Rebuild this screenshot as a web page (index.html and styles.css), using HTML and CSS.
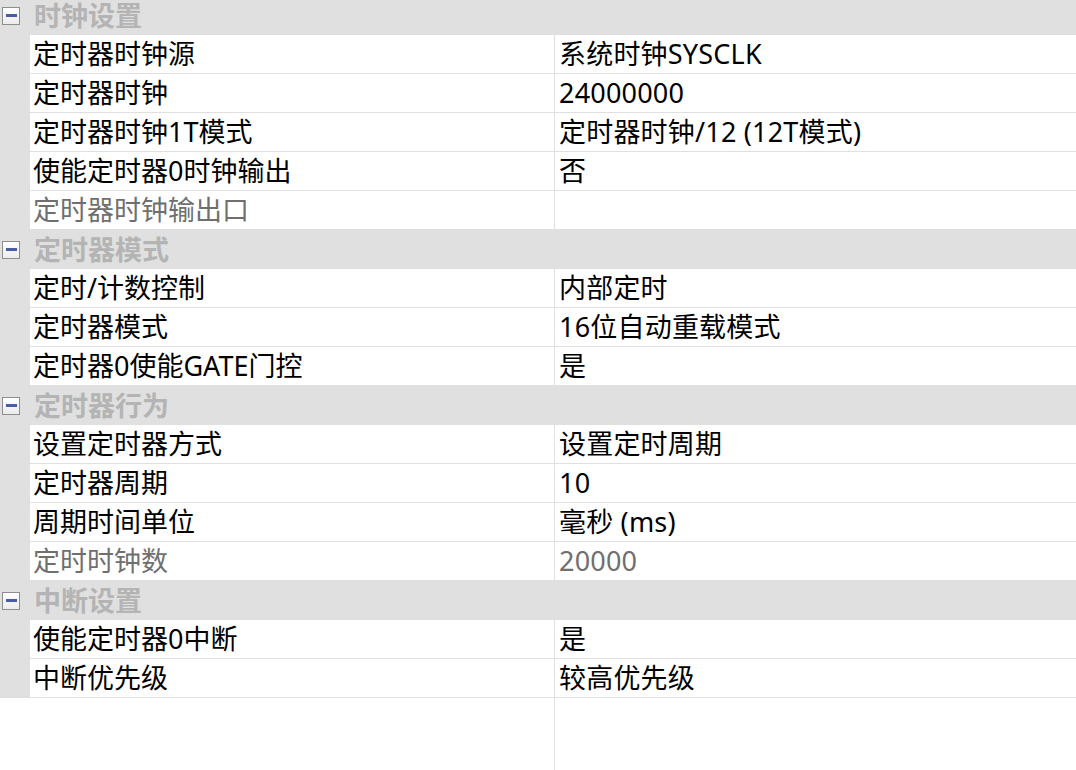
FILE: index.html
```html
<!DOCTYPE html>
<html lang="zh">
<head>
<meta charset="utf-8">
<title>定时器设置</title>
<link rel="stylesheet" href="styles.css">
</head>
<body>
<div class="grid">
  <div class="cat"><span class="toggle"><span class="minus"></span></span><span class="cat-label">时钟设置</span></div>
  <div class="row"><div class="gutter"></div><div class="name">定时器时钟源</div><div class="value">系统时钟SYSCLK</div></div>
  <div class="row"><div class="gutter"></div><div class="name">定时器时钟</div><div class="value">24000000</div></div>
  <div class="row"><div class="gutter"></div><div class="name">定时器时钟1T模式</div><div class="value">定时器时钟/12 (12T模式)</div></div>
  <div class="row"><div class="gutter"></div><div class="name">使能定时器0时钟输出</div><div class="value">否</div></div>
  <div class="row disabled"><div class="gutter"></div><div class="name">定时器时钟输出口</div><div class="value"></div></div>

  <div class="cat"><span class="toggle"><span class="minus"></span></span><span class="cat-label">定时器模式</span></div>
  <div class="row"><div class="gutter"></div><div class="name">定时/计数控制</div><div class="value">内部定时</div></div>
  <div class="row"><div class="gutter"></div><div class="name">定时器模式</div><div class="value">16位自动重载模式</div></div>
  <div class="row"><div class="gutter"></div><div class="name">定时器0使能GATE门控</div><div class="value">是</div></div>

  <div class="cat"><span class="toggle"><span class="minus"></span></span><span class="cat-label">定时器行为</span></div>
  <div class="row"><div class="gutter"></div><div class="name">设置定时器方式</div><div class="value">设置定时周期</div></div>
  <div class="row"><div class="gutter"></div><div class="name">定时器周期</div><div class="value">10</div></div>
  <div class="row"><div class="gutter"></div><div class="name">周期时间单位</div><div class="value">毫秒 (ms)</div></div>
  <div class="row disabled"><div class="gutter"></div><div class="name">定时时钟数</div><div class="value">20000</div></div>

  <div class="cat"><span class="toggle"><span class="minus"></span></span><span class="cat-label">中断设置</span></div>
  <div class="row"><div class="gutter"></div><div class="name">使能定时器0中断</div><div class="value">是</div></div>
  <div class="row"><div class="gutter"></div><div class="name">中断优先级</div><div class="value">较高优先级</div></div>
</div>
<div class="filler"><div class="filler-left"></div></div>
</body>
</html>
```

FILE: styles.css
```css
html, body {
  margin: 0;
  padding: 0;
  height: 100%;
  overflow: hidden;
  background: #ffffff;
}

body {
  display: flex;
  flex-direction: column;
  font-family: "Noto Sans", "Noto Sans CJK SC", sans-serif;
  font-size: 27px;
  color: #000000;
}

.grid {
  margin-top: -4px;
  display: flex;
  flex-direction: column;
}

.cat {
  height: 39px;
  background: #e0e0e0;
  display: flex;
  align-items: center;
}

.toggle {
  width: 16px;
  height: 16px;
  margin-left: 2px;
  margin-right: 14px;
  border: 1px solid #8e8e8e;
  background: linear-gradient(#ffffff, #ececec);
  display: flex;
  align-items: center;
  justify-content: center;
}

.minus {
  width: 11px;
  height: 3px;
  background: #4b5ba6;
}

.cat-label {
  font-weight: bold;
  color: #b4b4b4;
  line-height: 39px;
}

.row {
  height: 39px;
  display: grid;
  grid-template-columns: 30px 525px 1fr;
}

.gutter {
  background: #e0e0e0;
}

.name {
  border-right: 1px solid #e0e0e0;
  border-bottom: 1px solid #e0e0e0;
  padding-left: 3px;
  line-height: 38px;
  white-space: nowrap;
  overflow: hidden;
}

.value {
  border-bottom: 1px solid #e0e0e0;
  padding-left: 4px;
  line-height: 38px;
  letter-spacing: 0.2px;
  white-space: nowrap;
  overflow: hidden;
}

.disabled .name,
.disabled .value {
  color: #6f6f6f;
}

.filler {
  flex: 1;
  display: flex;
}

.filler-left {
  width: 554px;
  border-right: 1px solid #e0e0e0;
}
```
